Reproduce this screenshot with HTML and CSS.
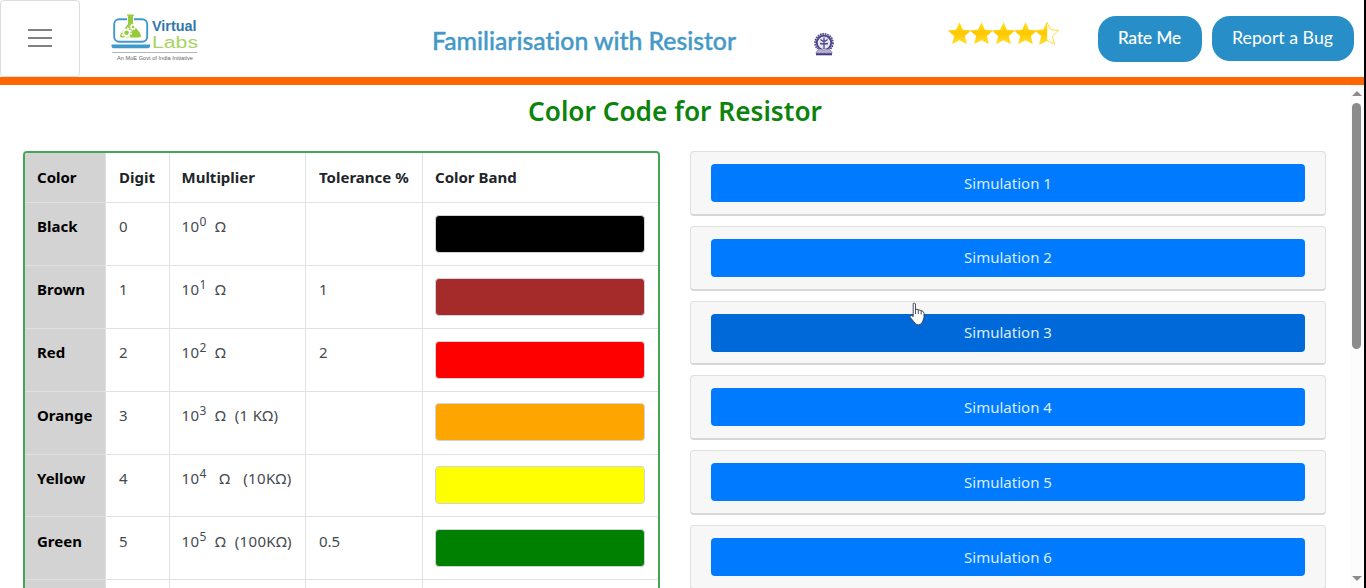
FILE: index.html
```html
<!DOCTYPE html>
<html lang="en">
<head>
<meta charset="utf-8">
<title>Color Code for Resistor</title>
<link rel="stylesheet" href="styles.css">
</head>
<body>
<div class="app">
  <header class="topbar">
    <button class="menu" aria-label="Menu"><span></span><span></span><span></span></button>
    <svg class="logo" width="90" height="50" viewBox="0 0 90 50">
      <rect x="3.200" y="7.200" width="33" height="22.500" rx="5" fill="#fff" stroke="#3f9acb" stroke-width="1.900"/>
      <path d="M15.500 2h8v2h-1v8l7 9q2.500 5-2 5H11.500q-4.500 0-2-5l7-9V4h-1z" fill="#97ca3d" stroke="#fff" stroke-width="1"/>
      <circle cx="15.500" cy="20.800" r="3.200" fill="none" stroke="#fff" stroke-width="1.900"/>
      <circle cx="15.500" cy="20.800" r="4.900" fill="none" stroke="#fff" stroke-width="1.300" stroke-dasharray="2 1.850"/>
      <circle cx="22" cy="15" r="2" fill="none" stroke="#fff" stroke-width="1.300"/>
      <circle cx="22" cy="15" r="3" fill="none" stroke="#fff" stroke-width=".9" stroke-dasharray="1.200 1.150"/>
      <path d="M.5 32.500h38.500v1.500q0 2.300-3 2.300H3.500q-3 0-3-2.300z" fill="#3f9acb"/>
      <text class="logo-virtual" x="41" y="19" textLength="44.500" lengthAdjust="spacingAndGlyphs">Virtual</text>
      <text class="logo-labs" x="41" y="36" textLength="46" lengthAdjust="spacingAndGlyphs">Labs</text>
      <path d="M1 40.500h85" stroke="#b5b5b5" stroke-width="1"/>
      <text class="logo-tag" x="6" y="47.500" textLength="76" lengthAdjust="spacingAndGlyphs">An MoE Govt of India Initiative</text>
    </svg>
    <svg class="title" width="310" height="44"><text x="2" y="27" textLength="304" lengthAdjust="spacingAndGlyphs">Familiarisation with Resistor</text></svg>
    <svg class="seal" width="22" height="24" viewBox="0 0 22 24">
      <circle cx="11" cy="10.800" r="8.900" fill="none" stroke="#4d4488" stroke-width="1.800" stroke-dasharray="1.700 .8"/>
      <circle cx="11" cy="10.800" r="7.200" fill="#e9e7f3" stroke="#4d4488" stroke-width="1.900"/>
      <path d="M11 6v12M7.500 7.500L11 10l3.500-2.500M7 11.500l4 .5 4-.5M11 5.500V9" fill="none" stroke="#4d4488" stroke-width="1.300"/>
      <path d="M4 17h14v4H4z" fill="#fff"/>
      <path d="M3 20.500l3-3.500 5 1 5-1 3 3.500v.8H3z" fill="#b7b3d2" stroke="#6f68a0" stroke-width=".7"/>
      <path d="M3 21.300h16v2H3z" fill="#443b80"/>
    </svg>
    <svg class="stars" width="112" height="26" viewBox="0 0 112 26">
      <defs>
        <linearGradient id="gold" x1="0" y1="0" x2="0" y2="1"><stop offset="0" stop-color="#ffe11a"/><stop offset=".5" stop-color="#ffc800"/><stop offset="1" stop-color="#ffe02e"/></linearGradient>
        <path id="star" d="M11 0l3.400 7.400 8.200.7-6.200 5.600 2 8.200-7.400-4-7.400 4 2-8.200-6.200-5.600 8.200-.7z"/>
      </defs>
      <g fill="url(#gold)"><use href="#star" x="1.500" y="2.300"/><use href="#star" x="23.500" y="2.300"/><use href="#star" x="45.500" y="2.300"/><use href="#star" x="67.500" y="2.300"/></g>
      <use href="#star" x="89" y="2.300" fill="#fff" stroke="#ffdc3c" stroke-width="1"/>
      <path d="M100.200 2v18.500l-7.500 4 2-8.400-6-5.300 8-.7z" fill="url(#gold)"/>
    </svg>
    <button class="pill rate"><svg width="64" height="26"><text x="0" y="18" textLength="63" lengthAdjust="spacingAndGlyphs">Rate Me</text></svg></button>
    <button class="pill bug"><svg width="102" height="26"><text x="0" y="18" textLength="101" lengthAdjust="spacingAndGlyphs">Report a Bug</text></svg></button>
  </header>
  <main class="page">
    <section class="content">
      <h1><svg width="296" height="44"><text x="1" y="29" textLength="294" lengthAdjust="spacingAndGlyphs">Color Code for Resistor</text></svg></h1>
      <div class="columns">
        <div class="table">
          <div class="row head"><div class="name">Color</div><div>Digit</div><div class="mult-head">Multiplier</div><div>Tolerance&nbsp;%</div><div class="band-cell">Color Band</div></div>
          <div class="row"><div class="name">Black</div><div>0</div><div class="mult">10<sup>0</sup>&nbsp; Ω</div><div></div><div class="band-cell"><i class="band black"></i></div></div>
          <div class="row"><div class="name">Brown</div><div>1</div><div class="mult">10<sup>1</sup>&nbsp; Ω</div><div>1</div><div class="band-cell"><i class="band brown"></i></div></div>
          <div class="row"><div class="name">Red</div><div>2</div><div class="mult">10<sup>2</sup>&nbsp; Ω</div><div>2</div><div class="band-cell"><i class="band red"></i></div></div>
          <div class="row"><div class="name">Orange</div><div>3</div><div class="mult">10<sup>3</sup>&nbsp; Ω&nbsp; (1 KΩ)</div><div></div><div class="band-cell"><i class="band orange"></i></div></div>
          <div class="row"><div class="name">Yellow</div><div>4</div><div class="mult">10<sup>4</sup>&nbsp;&nbsp; Ω&nbsp;&nbsp; (10KΩ)</div><div></div><div class="band-cell"><i class="band yellow"></i></div></div>
          <div class="row"><div class="name">Green</div><div>5</div><div class="mult">10<sup>5</sup>&nbsp; Ω&nbsp; (100KΩ)</div><div>0.5</div><div class="band-cell"><i class="band green"></i></div></div>
          <div class="row"><div class="name"></div><div></div><div></div><div></div><div></div></div>
        </div>
        <div class="sims">
          <div class="card"><button>Simulation 1</button></div>
          <div class="card"><button>Simulation 2</button></div>
          <div class="card"><button class="hover">Simulation 3</button></div>
          <div class="card"><button>Simulation 4</button></div>
          <div class="card"><button>Simulation 5</button></div>
          <div class="card"><button>Simulation 6</button></div>
        </div>
      </div>
    </section>
    <div class="scrollbar"><i class="up"></i><i class="thumb"></i><i class="down"></i></div>
  </main>
  <svg class="cursor" width="16" height="24" viewBox="0 0 16 24"><path d="M4.200 1.500q1.500-1.200 2.300.5V7l6.500 1.800q2 .8 2 2.600v4l-1.500 4.500q-1.500 3-4 3-3 0-4.500-3l-3.700-4.400q-1-1.800.7-2.500l2.200 1.500z" fill="#fff" stroke="#3b3b4b" stroke-width=".9"/><path d="M6.500 7v5M9.300 8V12M12.200 9v3.500" stroke="#3b3b4b" stroke-width=".9"/></svg>
</div>
</body>
</html>
```
FILE: styles.css
```css
* { box-sizing: border-box; }
body { margin: 0; background: #fff; font-family: "Noto Sans", "Open Sans", sans-serif; }
button { font: inherit; border: 0; padding: 0; }
svg { overflow: visible; }
.app { width: 1366px; height: 588px; overflow: hidden; position: relative; border-right: 2px solid #000; display: flex; flex-direction: column; }
.topbar { height: 85px; flex: none; display: flex; align-items: flex-start; border-bottom: 8px solid #f60; }
.menu { width: 80px; height: 77px; background: #fff; border: 1px solid #ddd; border-radius: 4px; display: flex; flex-direction: column; align-items: center; justify-content: center; gap: 6px; padding-bottom: 2px; }
.menu span { width: 24px; height: 2px; background: #808080; }
.logo { margin: 12px 0 0 31px; }
.logo-virtual { font: 700 15.500px "Liberation Sans", sans-serif; fill: #2f78ac; }
.logo-labs { font: 300 16px "Liberation Sans", sans-serif; fill: #a9d364; }
.logo-tag { font: 6px "Liberation Sans", sans-serif; fill: #666; }
.title { margin: 23px 0 0 229px; }
.title text { font: 500 24.500px Lato, sans-serif; font-variant-ligatures: none; fill: #4499c8; stroke: #4499c8; stroke-width: .4; }
.seal { margin: 32px 0 0 73px; }
.stars { margin: 20px 0 0 112px; }
.pill { background: #288ec8; border-radius: 18px; display: flex; align-items: center; justify-content: center; margin-top: 16px; height: 45px; }
.pill text { font: 16.500px Lato, sans-serif; fill: #fff; }
.rate { width: 104px; height: 46px; margin-left: 39px; }
.rate text { stroke: #fff; stroke-width: .2; }
.bug { width: 142px; margin-left: 10px; }
.page { flex: 1; min-height: 0; display: flex; }
.content { width: 1350px; }
h1 { margin: 0; height: 66px; padding-top: 7px; line-height: 0; text-align: center; }
h1 text { font: 600 26.500px "Noto Sans", sans-serif; fill: #0c840c; }
.columns { display: flex; gap: 30px; padding-left: 23px; align-items: flex-start; }
.table { width: 637px; border: 2px solid #43a657; border-radius: 4px; overflow: hidden; }
.row { display: grid; grid-template-columns: 81px 63.500px 136.500px 117px 1fr; height: 62.900px; font-size: 15px; line-height: 24px; color: #454a50; }
.row > div { padding: 11.400px 0 0 13px; border-bottom: 1px solid #dee2e6; border-right: 1px solid #dee2e6; white-space: nowrap; }
.row > div:last-child { border-right: 0; }
.row > .name { background: #d3d3d3; color: #000; font-weight: 700; padding-left: 12px; }
.row > .mult { letter-spacing: .35px; padding-left: 12px; }
.row > .mult-head { padding-left: 12px; }
.row > .band-cell { padding-left: 12px; }
.head { height: 50px; font-weight: 700; color: #212529; }
.row.head > div { padding-top: 12px; }
sup { font-size: 12px; line-height: 0; position: relative; top: 0; }
.band { display: block; width: 210px; height: 38px; margin-top: .4px; border: 1px solid #ced4da; border-radius: 4px; }
.black { background: #000; }
.brown { background: #a52a2a; }
.red { background: #f00; }
.orange { background: #ffa500; }
.yellow { background: #ff0; }
.green { background: #008000; }
.sims { width: 636px; display: flex; flex-direction: column; gap: 10px; }
.card { height: 64.830px; padding: 12px 20px; background: #f7f7f7; border: 1px solid #dfdfdf; border-bottom: 2px solid #d7d7d7; border-radius: 4px; }
.card button { display: block; width: 594px; height: 38px; padding-bottom: 1px; border-radius: 4px; background: #007bff; color: #dcecff; font-size: 15px; }
.card .hover { background: #0069d9; }
.scrollbar { width: 14px; background: #fcfcfc; display: flex; flex-direction: column; align-items: center; padding: 6px 1px 7px 0; }
.up { border: 5px solid transparent; border-top: 0; border-bottom: 5px solid #8b8b8b; }
.thumb { width: 9px; height: 246px; border-radius: 5px; background: #8b8b8b; margin-top: 7px; }
.down { margin-top: auto; border: 5px solid transparent; border-bottom: 0; border-top: 5px solid #8b8b8b; }
.cursor { position: absolute; left: 909px; top: 302px; }
```
